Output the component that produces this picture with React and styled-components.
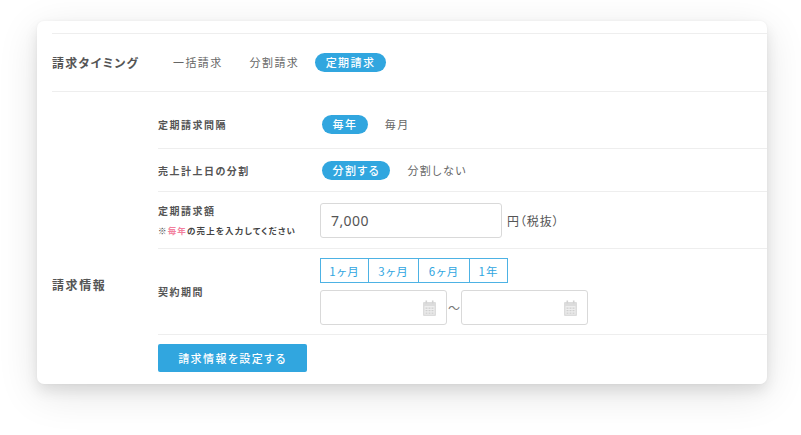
import React from "react";
import styled, { createGlobalStyle } from "styled-components";

const Global = createGlobalStyle`
  html, body { margin: 0; padding: 0; background: #fff; }
  body { font-family: "Noto Sans CJK JP", "Noto Sans", sans-serif; color: #4a4a4a; font-feature-settings: "palt"; }
`;
const Page = styled.div`
  width: 801px; height: 435px; overflow: hidden; padding: 21px 0 0 37px; box-sizing: border-box;
`;
const Card = styled.div`
  width: 730px; height: 363px; box-sizing: border-box; background: #fff; border-radius: 7px;
  padding: 12px 0 0 15px;
  box-shadow: 0 0 3px rgba(0,0,0,.04), 0 7px 14px rgba(0,0,0,.09), 0 10px 42px rgba(0,0,0,.11);
`;
const TimingRow = styled.div`
  height: 59px; box-sizing: border-box; display: flex; align-items: center;
  border-top: 1px solid #eeeeee; border-bottom: 1px solid #eeeeee;
`;
const SectionLabel = styled.div`
  font-size: 12px; font-weight: 700; letter-spacing: 1.6px; color: #555; line-height: 18px; white-space: nowrap;
`;
const TimingLabel = styled(SectionLabel)` width: 121px; flex: none; letter-spacing: 1.2px; `;
const Options = styled.div`
  display: flex; align-items: center; gap: 17px;
`;
const Option = styled.span`
  font-size: 11px; letter-spacing: 1.4px; line-height: 19px; white-space: nowrap;
  height: 19px; border-radius: 10px;
  ${p => p.$active
    ? `background:#31a6df;color:#fff;font-weight:500;padding:0 10.5px;`
    : `color:#666;`}
`;
const TimingOptions = styled(Options)`
  gap: 27px;
  & > span:last-child { margin-left: -11px; }
`;
const Info = styled.div` display: flex; `;
const InfoLabel = styled(SectionLabel)` width: 106px; flex: none; padding-top: 184px; `;
const Rows = styled.div` flex: 1; min-width: 0; `;
const Row = styled.div`
  display: flex; align-items: center; box-sizing: border-box; height: ${p => p.$h}px;
  padding-top: ${p => p.$top ?? 0}px; border-bottom: 1px solid #eeeeee;
`;
const RowLabel = styled.div`
  width: ${p => p.$w ?? 164}px; flex: none; font-size: 10px; font-weight: 700; letter-spacing: 1.5px; color: #555; line-height: 15px;
`;
const Note = styled.div`
  font-size: 8.5px; font-weight: 700; letter-spacing: 1.15px; margin-top: 6px; margin-bottom: 2px; line-height: 12px; white-space: nowrap; color: #444;
`;
const Pink = styled.span` color: #f2809d; `;
const Input = styled.div`
  width: ${p => p.$w}px; height: ${p => p.$h}px; box-sizing: border-box; background: #fff;
  border: 1px solid #d9d9d9; border-radius: 3px; display: flex; align-items: center;
  justify-content: ${p => p.$icon ? "flex-end" : "flex-start"};
  padding: ${p => p.$icon ? "0 10px 0 0" : "0 0 0 10px"};
  font-family: "Noto Sans", sans-serif; font-size: 14px; letter-spacing: .4px; color: #555;
`;
const Unit = styled.span` margin-left: 5px; font-size: 12px; letter-spacing: .9px; color: #555; white-space: nowrap; `;
const Stack = styled.div` display: flex; flex-direction: column; gap: 7px; margin-left: -2px; `;
const Segments = styled.div`
  display: flex; width: max-content; height: 25px; box-sizing: border-box;
  border: 1px solid #4db2e4;
`;
const Segment = styled.div`
  width: ${p => p.$w}px; display: flex; align-items: center; justify-content: center; box-sizing: border-box;
  font-size: 11.5px; letter-spacing: 1px; color: #31a6df; white-space: nowrap;
  & + & { border-left: 1px solid #4db2e4; }
`;
const Dates = styled.div` display: flex; align-items: center; `;
const Tilde = styled.span` width: 14px; text-align: center; font-size: 12px; color: #777; line-height: 1; `;
const Submit = styled.button`
  display: block; width: 149px; height: 28px; margin-top: 9px; border: 0; border-radius: 2px; background: #31a6df;
  color: #fff; font: 500 11px "Noto Sans CJK JP", sans-serif; font-feature-settings: "palt"; letter-spacing: 1.4px; padding: 0;
`;
const Calendar = () => (
  <svg width="13" height="16" viewBox="0 0 13 16" aria-hidden="true">
    <rect x="0" y="2" width="13" height="14" rx="1" fill="#dcdcdc" />
    <rect x="2.5" y="0.5" width="1.6" height="3" fill="#d2d2d2" />
    <rect x="8.9" y="0.5" width="1.6" height="3" fill="#d2d2d2" />
    <rect x="1.5" y="6" width="10" height="8.5" fill="#eeeeee" />
    {[7.5, 10, 12.5].map(y => [2.5, 5.5, 8.5].map(x => (
      <rect key={`${x}-${y}`} x={x} y={y} width="2" height="1.3" fill="#cfcfcf" />
    )))}
  </svg>
);

export default function App() {
  return (
    <Page>
      <Global />
      <Card>
        <TimingRow>
          <TimingLabel>請求タイミング</TimingLabel>
          <TimingOptions>
            <Option>一括請求</Option>
            <Option>分割請求</Option>
            <Option $active>定期請求</Option>
          </TimingOptions>
        </TimingRow>
        <Info>
          <InfoLabel>請求情報</InfoLabel>
          <Rows>
            <Row $h={57} $top={9}>
              <RowLabel>定期請求間隔</RowLabel>
              <Options>
                <Option $active>毎年</Option>
                <Option>毎月</Option>
              </Options>
            </Row>
            <Row $h={43}>
              <RowLabel>売上計上日の分割</RowLabel>
              <Options>
                <Option $active>分割する</Option>
                <Option>分割しない</Option>
              </Options>
            </Row>
            <Row $h={57}>
              <RowLabel $w={162}>
                定期請求額
                <Note>※<Pink>毎年</Pink>の売上を入力してください</Note>
              </RowLabel>
              <Input $w={182} $h={35}>7,000</Input>
              <Unit>円（税抜）</Unit>
            </Row>
            <Row $h={86}>
              <RowLabel>契約期間</RowLabel>
              <Stack>
                <Segments>
                  <Segment $w={47}>1ヶ月</Segment>
                  <Segment $w={50}>3ヶ月</Segment>
                  <Segment $w={51}>6ヶ月</Segment>
                  <Segment $w={38}>1年</Segment>
                </Segments>
                <Dates>
                  <Input $w={127} $h={35} $icon><Calendar /></Input>
                  <Tilde>～</Tilde>
                  <Input $w={127} $h={35} $icon><Calendar /></Input>
                </Dates>
              </Stack>
            </Row>
            <Submit>請求情報を設定する</Submit>
          </Rows>
        </Info>
      </Card>
    </Page>
  );
}
